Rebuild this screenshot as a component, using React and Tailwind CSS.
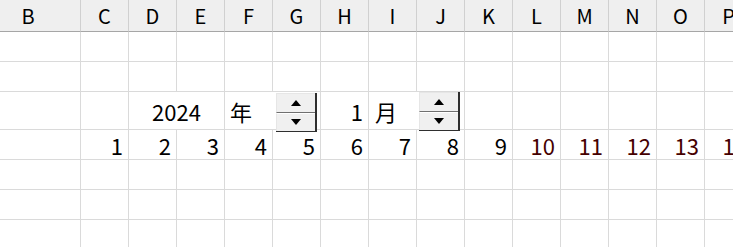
import React from 'react';

const cols = ['C', 'D', 'E', 'F', 'G', 'H', 'I', 'J', 'K', 'L', 'M', 'N', 'O', 'P', 'Q'];
const font = { fontFamily: '"Noto Sans CJK JP", "Noto Sans", sans-serif' };

const Arrow = ({ up }) => (
  <svg width="10" height="6" viewBox="0 0 10 6">
    {up ? <polygon points="0,6 10,6 5,0" fill="#000" /> : <polygon points="0,0 10,0 5,6" fill="#000" />}
  </svg>
);

const Spinner = ({ className }) => (
  <div className={`absolute flex h-[39px] w-[41px] flex-col border-r-2 border-b border-[#2f2f2f] bg-[#f0f0f0] ${className}`}>
    <div className="flex flex-1 items-center justify-center border-t border-l border-b border-t-[#e6e6e6] border-l-[#e6e6e6] border-b-[#707070]">
      <Arrow up />
    </div>
    <div className="flex flex-1 items-center justify-center border-l border-t border-[#ffffff] border-l-[#e6e6e6]">
      <Arrow />
    </div>
  </div>
);

const Cell = ({ w = 'w-[48px]', h, children, className = '' }) => (
  <div className={`flex shrink-0 items-center border-r border-b border-[#dadada] ${w} ${h} ${className}`}>
    {children}
  </div>
);

const Row = ({ h, children }) => <div className="flex">{children}</div>;

export default function App() {
  const plainRow = (key) => (
    <div key={key} className="flex">
      <Cell w="w-[105px]" h="h-[30px]" />
      {cols.map((c) => <Cell key={c} h="h-[30px]" />)}
    </div>
  );

  return (
    <div className="h-[247px] w-[733px] overflow-hidden bg-white text-[22px] text-black" style={font}>
      <div className="ml-[-24px]">
        {/* header */}
        <div className="flex bg-[#efefef]">
          <div className="flex h-[32px] w-[105px] shrink-0 items-center justify-center border-r border-b border-r-[#d0d0d0] border-b-[#a6a6a6] text-[20px]">B</div>
          {cols.map((c) => (
            <div key={c} className="flex h-[32px] w-[48px] shrink-0 items-center justify-center border-r border-b border-r-[#d0d0d0] border-b-[#a6a6a6] text-[20px]">
              {c}
            </div>
          ))}
        </div>

        {plainRow('r1')}
        {plainRow('r2')}

        {/* year / month row */}
        <div className="flex">
          <Cell w="w-[105px]" h="h-[38px]" />
          <Cell h="h-[38px]" />
          <Cell w="w-[96px]" h="h-[38px]" className="justify-center pt-[2px]">2024</Cell>
          <Cell w="w-[96px]" h="h-[38px]" className="relative pl-[5px] pt-[2px]">
            <span>年</span>
            <Spinner className="left-[51px] top-[1px]" />
          </Cell>
          <Cell h="h-[38px]" className="justify-end pr-[5px] pt-[2px]">1</Cell>
          <Cell w="w-[96px]" h="h-[38px]" className="relative pl-[6px] pt-[2px]">
            <span>月</span>
            <Spinner className="left-[50px] top-[0px]" />
          </Cell>
          {cols.slice(9).map((c) => <Cell key={c} h="h-[38px]" />)}
        </div>

        {/* day numbers */}
        <div className="flex">
          <Cell w="w-[105px]" h="h-[30px]" />
          {cols.map((c, i) => (
            <Cell key={c} h="h-[30px]" className={`justify-end pr-[5px] pt-[1px] ${i + 1 >= 10 ? 'text-[#450000]' : ''}`}>
              {i + 1}
            </Cell>
          ))}
        </div>

        {plainRow('r5')}
        {plainRow('r6')}
        {plainRow('r7')}
      </div>
    </div>
  );
}
